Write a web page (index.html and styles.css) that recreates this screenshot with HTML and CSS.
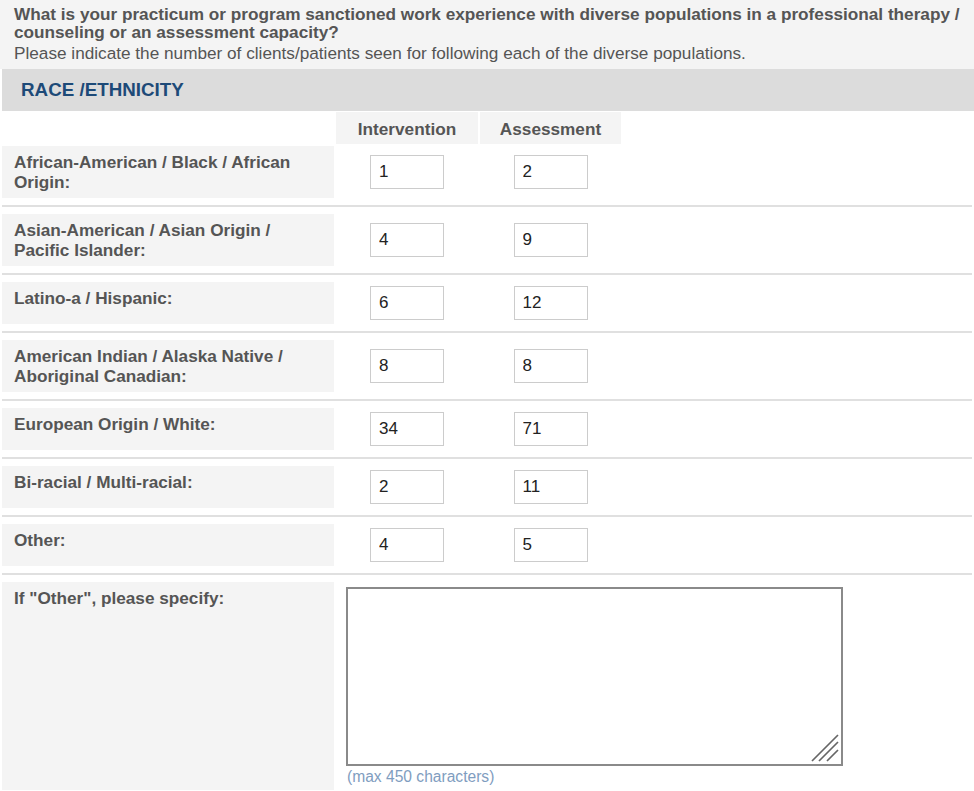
FILE: index.html
```html
<!DOCTYPE html>
<html lang="en">
<head>
    <meta charset="UTF-8">
    <meta name="viewport" content="width=device-width, initial-scale=1.0">
    <title>Diverse Populations</title>
    <link rel="stylesheet" href="styles.css">
</head>
<body>

<div class="question">
    <div class="q-title">What is your practicum or program sanctioned work experience with diverse populations in a professional therapy / counseling or an assessment capacity?</div>
    <div class="q-help">Please indicate the number of clients/patients seen for following each of the diverse populations.</div>
</div>

<div class="section-head">RACE /ETHNICITY</div>

<table class="grid">
    <colgroup>
        <col class="c-label">
        <col class="c-num">
        <col class="c-num2">
        <col>
    </colgroup>
    <tr class="col-heads">
        <td></td>
        <th>Intervention</th>
        <th>Assessment</th>
        <td></td>
    </tr>
    <tr>
        <td class="label">African-American / Black / African Origin:</td>
        <td class="num"><input type="text" value="1"></td>
        <td class="num"><input type="text" value="2"></td>
        <td></td>
    </tr>
    <tr class="sep"><td colspan="4"><div class="rule"></div></td></tr>
    <tr>
        <td class="label">Asian-American / Asian Origin / Pacific Islander:</td>
        <td class="num"><input type="text" value="4"></td>
        <td class="num"><input type="text" value="9"></td>
        <td></td>
    </tr>
    <tr class="sep"><td colspan="4"><div class="rule"></div></td></tr>
    <tr>
        <td class="label">Latino-a / Hispanic:</td>
        <td class="num"><input type="text" value="6"></td>
        <td class="num"><input type="text" value="12"></td>
        <td></td>
    </tr>
    <tr class="sep"><td colspan="4"><div class="rule"></div></td></tr>
    <tr>
        <td class="label">American Indian / Alaska Native / Aboriginal Canadian:</td>
        <td class="num"><input type="text" value="8"></td>
        <td class="num"><input type="text" value="8"></td>
        <td></td>
    </tr>
    <tr class="sep"><td colspan="4"><div class="rule"></div></td></tr>
    <tr>
        <td class="label">European Origin / White:</td>
        <td class="num"><input type="text" value="34"></td>
        <td class="num"><input type="text" value="71"></td>
        <td></td>
    </tr>
    <tr class="sep"><td colspan="4"><div class="rule"></div></td></tr>
    <tr>
        <td class="label">Bi-racial / Multi-racial:</td>
        <td class="num"><input type="text" value="2"></td>
        <td class="num"><input type="text" value="11"></td>
        <td></td>
    </tr>
    <tr class="sep"><td colspan="4"><div class="rule"></div></td></tr>
    <tr>
        <td class="label">Other:</td>
        <td class="num"><input type="text" value="4"></td>
        <td class="num"><input type="text" value="5"></td>
        <td></td>
    </tr>
    <tr class="sep"><td colspan="4"><div class="rule"></div></td></tr>
    <tr>
        <td class="label">If "Other", please specify:</td>
        <td class="specify" colspan="3">
            <div class="ta-wrap">
                <textarea maxlength="450"></textarea>
                <svg class="grip" width="28" height="28" viewBox="0 0 28 28">
                    <path d="M1 27 L27 1 M8 27 L27 8 M16 27 L27 16" stroke="#666" stroke-width="1.7" fill="none"/>
                </svg>
            </div>
            <div class="hint">(max 450 characters)</div>
        </td>
    </tr>
</table>

</body>
</html>
```

FILE: styles.css
```css
body {
    margin: 0;
    font-family: "Liberation Sans", Arial, sans-serif;
    color: #555;
    background-color: #fff;
}
.question {
    background-color: #f4f4f4;
    padding: 5px 14px 7px;
    font-size: 17.2px;
    line-height: 18px;
}
.q-title {
    font-weight: bold;
}
.q-help {
    margin-top: 3px;
}
.section-head {
    margin-left: 2px;
    height: 42px;
    line-height: 42px;
    padding-left: 19px;
    background-color: #dcdcdc;
    color: #1d4a78;
    font-weight: bold;
    font-size: 18.8px;
}
.grid {
    width: 100%;
    table-layout: fixed;
    border-spacing: 2px;
    margin-top: -1px;
    font-size: 17.2px;
}
.c-label {
    width: 332px;
}
.c-num {
    width: 142px;
}
.c-num2 {
    width: 141px;
}
.grid td {
    padding: 0;
}
.col-heads th {
    height: 32px;
    box-sizing: border-box;
    background-color: #f4f4f4;
    color: #555;
    font-weight: bold;
    text-align: center;
    padding: 2px 0 0;
}
.grid td.label {
    background-color: #f4f4f4;
    font-weight: bold;
    vertical-align: top;
    padding: 6px 12px;
    line-height: 20px;
}
.grid td.num {
    text-align: center;
    vertical-align: middle;
    padding: 4px 0;
}
.num input {
    box-sizing: border-box;
    width: 74px;
    height: 34px;
    border: 1px solid #ccc;
    padding: 0 8px;
    font-family: "Liberation Sans", Arial, sans-serif;
    font-size: 17px;
    color: #222;
}
.sep td {
    height: 12px;
}
.rule {
    height: 2px;
    background-color: #e0e0e0;
}
.grid td.specify {
    vertical-align: top;
    padding: 5px 10px 4px;
}
.ta-wrap {
    position: relative;
    width: 497px;
}
.ta-wrap textarea {
    display: block;
    box-sizing: border-box;
    width: 497px;
    height: 179px;
    border: 2px solid #8a8a8a;
    margin: 0;
    resize: none;
}
.grip {
    position: absolute;
    right: 4px;
    bottom: 4px;
}
.hint {
    margin-top: 2px;
    margin-left: 1px;
    font-size: 15.6px;
    color: #7f9dc0;
}
```
